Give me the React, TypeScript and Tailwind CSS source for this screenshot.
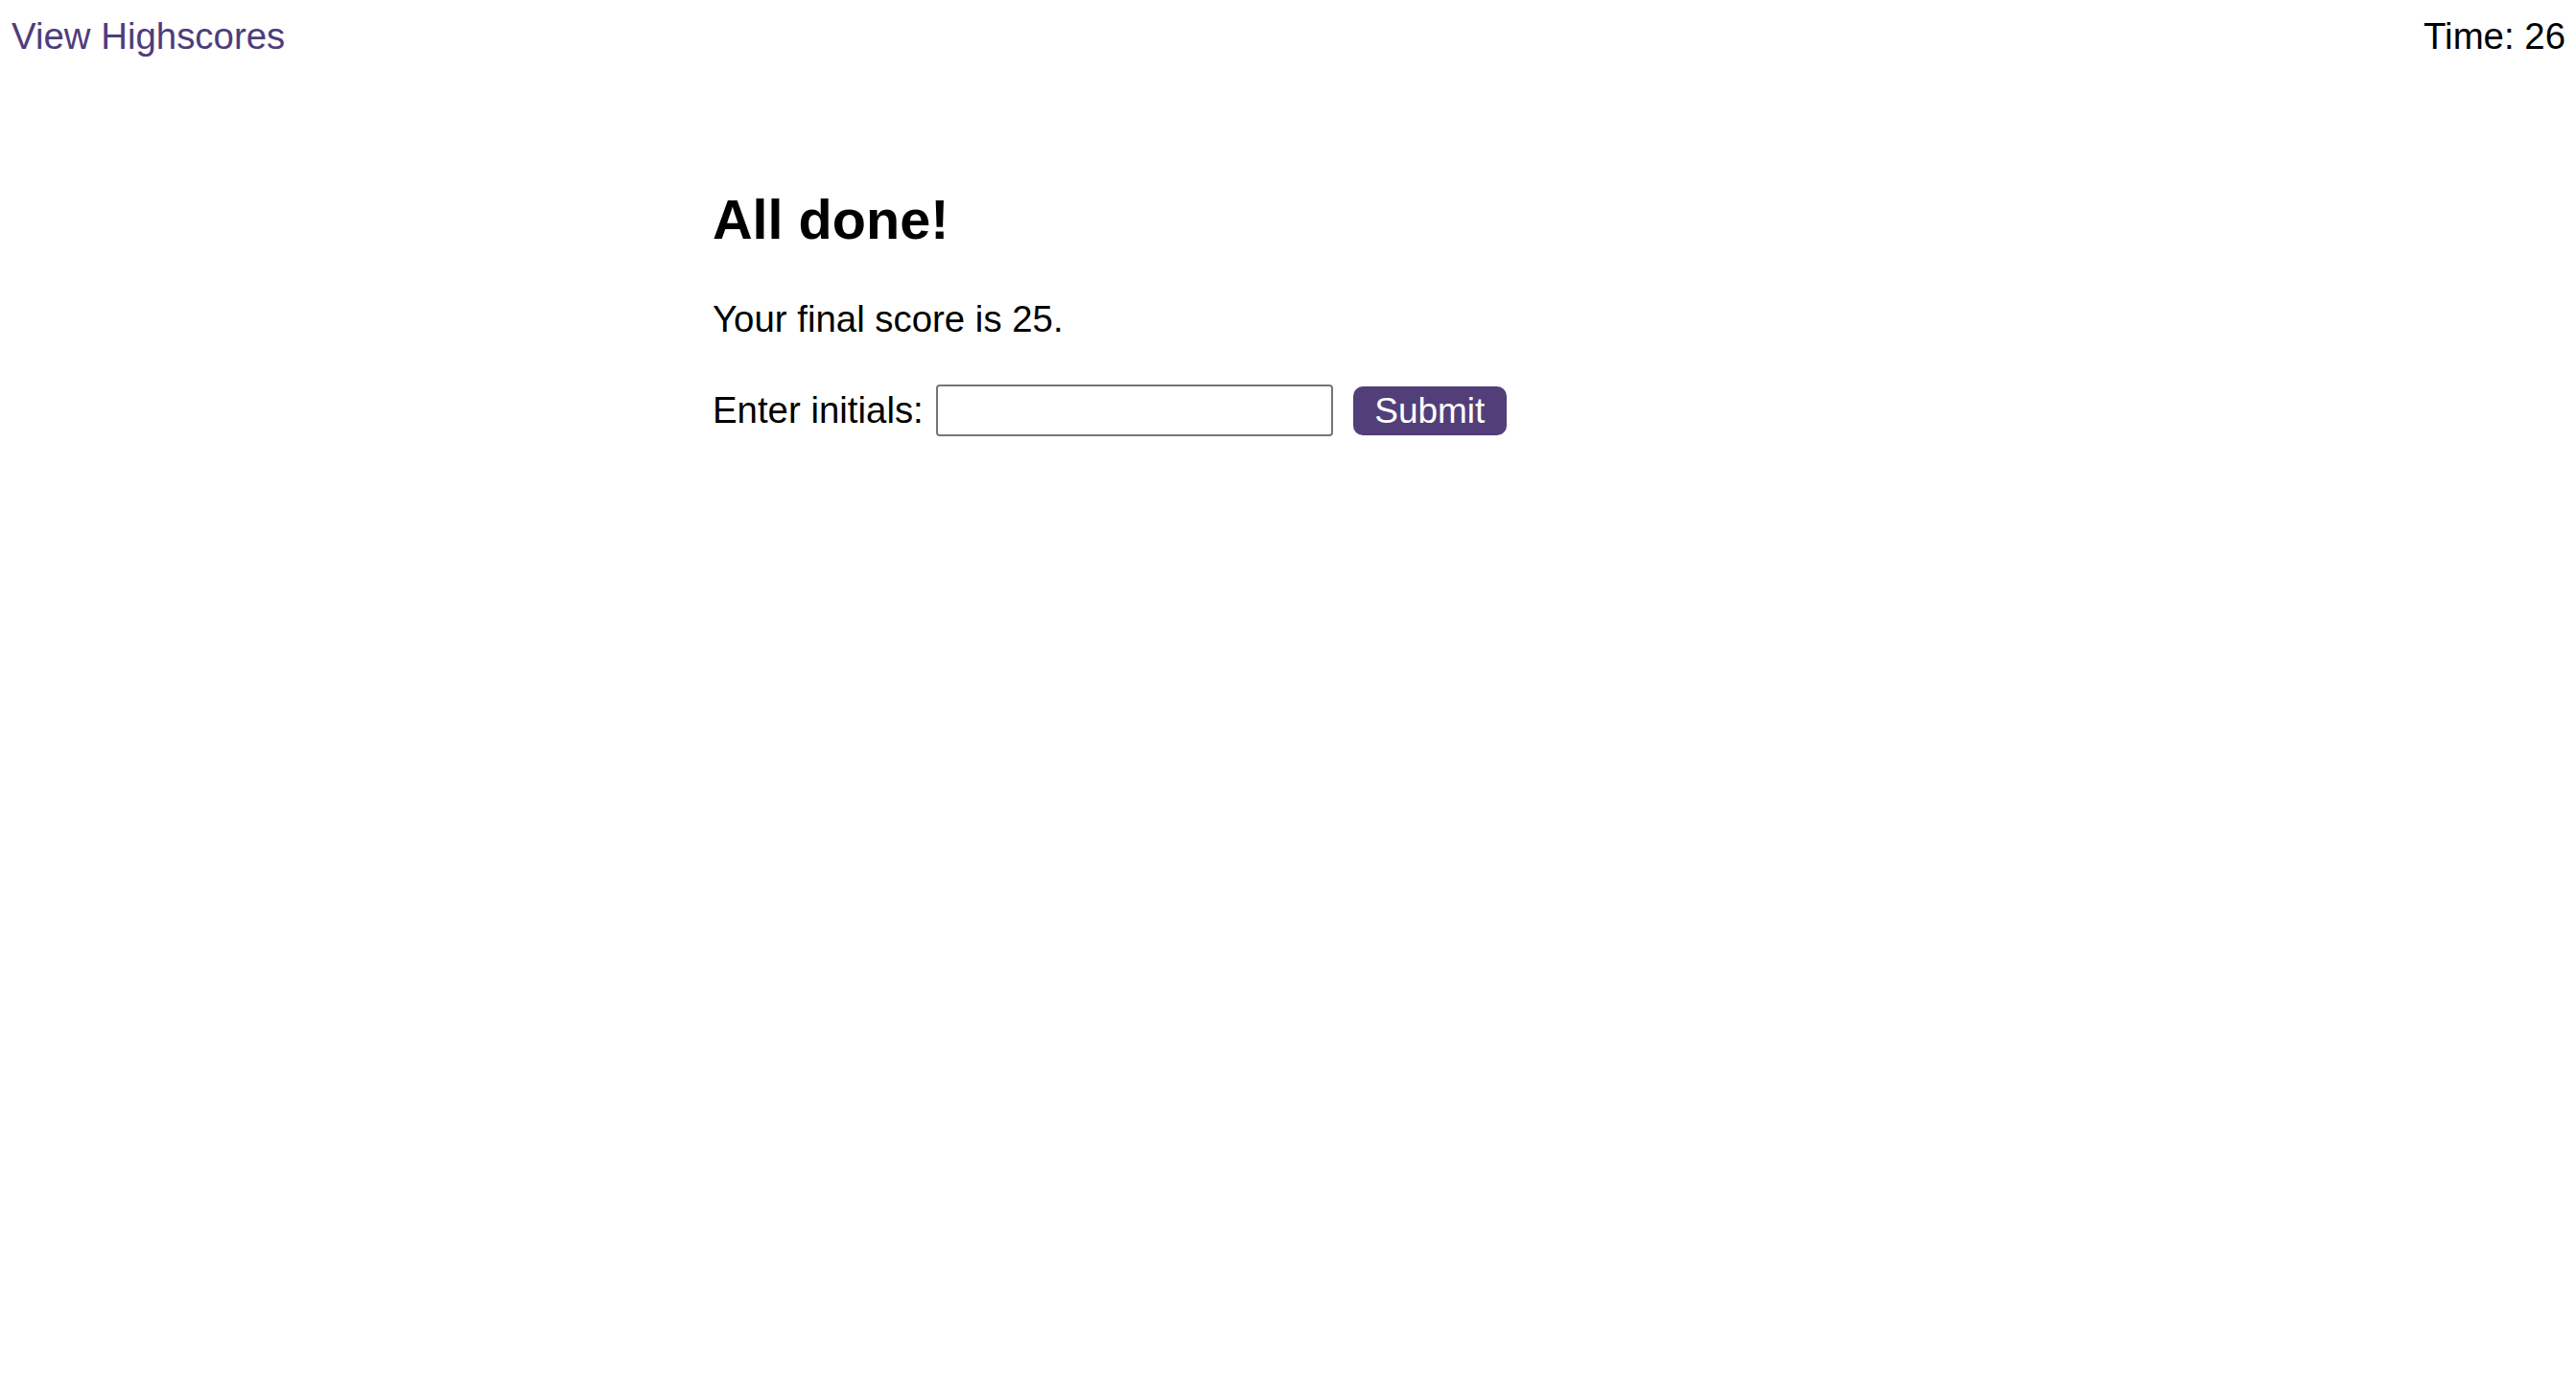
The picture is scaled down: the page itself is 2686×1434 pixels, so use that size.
import { useState } from 'react';

const font = { fontFamily: '"Liberation Sans", Arial, Helvetica, sans-serif' };

export default function App() {
    const [initials, setInitials] = useState('');

    return (
        <div className="min-h-screen bg-white text-black" style={font}>
            {/* Top bar */}
            <header className="flex justify-between items-start pt-[16px] pl-[12px] pr-[11px]">
                <a href="#highscores" className="text-[38.4px] leading-[44px] text-[#4f3c7b] no-underline">
                    View Highscores
                </a>
                <div className="text-[38.4px] leading-[44px] text-black">Time: 26</div>
            </header>

            {/* End-of-quiz panel */}
            <main className="w-[1200px] mx-auto mt-[136px]">
                <h1 className="text-[57.6px] leading-[66px] font-bold">All done!</h1>
                <p className="mt-[49px] text-[38.4px] leading-[44px]">Your final score is 25.</p>

                <form
                    className="mt-[46px] flex items-center"
                    onSubmit={(e) => e.preventDefault()}
                >
                    <label htmlFor="initials" className="text-[38.4px] leading-[44px]">
                        Enter initials:
                    </label>
                    <input
                        id="initials"
                        type="text"
                        value={initials}
                        onChange={(e) => setInitials(e.target.value)}
                        className="ml-[13px] w-[414px] h-[54px] border-2 border-[#767676] rounded-[4px] bg-white px-2 text-[32px] outline-none"
                    />
                    <button
                        type="submit"
                        className="ml-[21px] w-[160px] h-[51px] pt-[1px] rounded-[10px] bg-[#523f7a] text-white text-[37px] leading-[44px] flex items-center justify-center"
                    >
                        Submit
                    </button>
                </form>
            </main>
        </div>
    );
}
